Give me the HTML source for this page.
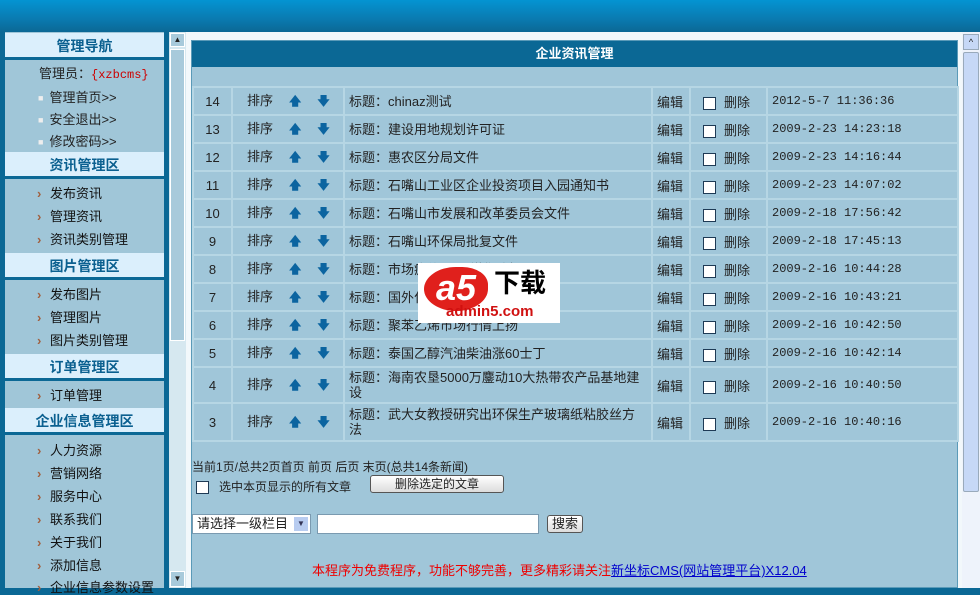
<!DOCTYPE html><html><head><meta charset="utf-8"><style>
*{margin:0;padding:0;box-sizing:border-box}
body{width:980px;height:588px;overflow:hidden;background:#0b6895;font:13px "Liberation Sans","Noto Sans CJK SC",sans-serif;position:relative;color:#222}
.a{position:absolute}
.top{left:0;top:0;width:980px;height:32px;background:linear-gradient(#0494d2,#0a7ab0 60%,#0b6895)}
.sb{left:5px;top:32px;width:159px;height:556px;background:#a0c6d8}
.h{position:absolute;left:5px;width:159px;height:27px;background:#dbeffc;border-bottom:3px solid #0b6895;color:#0b6090;font-weight:bold;font-size:14px;text-align:center;line-height:26px}
.it{position:absolute;left:50px;font-size:13px;color:#111;line-height:15px}
.it:before{content:"›";position:absolute;left:-13px;color:#a06040;font-weight:bold}
.main{left:186px;top:32px;width:776px;height:556px;background:#f2f8fb}
.box{left:191px;top:40px;width:767px;height:548px;background:#a0c6d9;border:1px solid #5a9ab8}
.hd{left:192px;top:41px;width:765px;height:26px;background:#0b6895;color:#fff;font-weight:bold;text-align:center;line-height:26px;font-size:13px}
table{position:absolute;left:192px;top:86px;border-collapse:collapse;font-size:13px}
td{border:2px solid #b6d6e4;background:#a0c6d9;height:28px;padding:0 4px;vertical-align:middle}
.n{width:39px;text-align:center}.s{width:112px;padding-left:14px}.t{width:308px;line-height:15px}.e{width:38px}.d{width:77px;padding-left:12px}.dt{width:191px;font-family:"Liberation Mono",monospace;font-size:12px}
.ar{color:#0b64a0;font-weight:bold;margin-left:16px;font-size:12px}
.cb{display:inline-block;width:13px;height:13px;border:1px solid #1e3a55;background:#fff;vertical-align:middle;margin-right:8px}
.scr{background:#a8cadb}
.btn{background:linear-gradient(#fff,#dcdcdc);border:1px solid #555;border-radius:3px;text-align:center;line-height:16px}
.bl{color:#eee;font-size:9px;margin-right:6px;vertical-align:1px}
</style></head><body>
<div class="a top"></div>
<div class="a sb"></div>
<div class="h" style="top:33px">管理导航</div>
<div class="a" style="left:39px;top:66px;line-height:15px">管理员：<span style="color:#c00;font-family:'Liberation Mono',monospace;font-size:12px">{xzbcms}</span></div>
<div class="a" style="left:38px;top:87px;line-height:22px;font-size:13px">
<div><span class="bl">■</span>管理首页&gt;&gt;</div><div><span class="bl">■</span>安全退出&gt;&gt;</div><div><span class="bl">■</span>修改密码&gt;&gt;</div></div>
<div class="h" style="top:152px">资讯管理区</div>
<div class="it" style="top:186px">发布资讯</div><div class="it" style="top:209px">管理资讯</div><div class="it" style="top:232px">资讯类别管理</div>
<div class="h" style="top:253px">图片管理区</div>
<div class="it" style="top:287px">发布图片</div><div class="it" style="top:310px">管理图片</div><div class="it" style="top:333px">图片类别管理</div>
<div class="h" style="top:354px">订单管理区</div>
<div class="it" style="top:388px">订单管理</div>
<div class="h" style="top:408px">企业信息管理区</div>
<div class="it" style="top:443px">人力资源</div><div class="it" style="top:466px">营销网络</div><div class="it" style="top:489px">服务中心</div><div class="it" style="top:512px">联系我们</div><div class="it" style="top:535px">关于我们</div><div class="it" style="top:558px">添加信息</div><div class="it" style="top:580px">企业信息参数设置</div>
<div class="a" style="left:169px;top:32px;width:17px;height:556px;background:#d6e8f0"></div>
<div class="a scr" style="left:170px;top:33px;width:15px;height:14px;border:1px solid #fff;text-align:center;font-size:8px;line-height:12px">▲</div>
<div class="a scr" style="left:170px;top:49px;width:15px;height:292px;border:1px solid #fff"></div>
<div class="a scr" style="left:170px;top:571px;width:15px;height:16px;border:1px solid #fff;text-align:center;font-size:8px;line-height:14px">▼</div>
<div class="a main"></div>
<div class="a box"></div>
<div class="a hd">企业资讯管理</div>
<table>
<tr><td class="n">14</td><td class="s">排序<span class="ar">🡅</span><span class="ar">🡇</span></td><td class="t">标题：chinaz测试</td><td class="e">编辑</td><td class="d"><span class="cb"></span>删除</td><td class="dt">2012-5-7 11:36:36</td></tr>
<tr><td class="n">13</td><td class="s">排序<span class="ar">🡅</span><span class="ar">🡇</span></td><td class="t">标题：建设用地规划许可证</td><td class="e">编辑</td><td class="d"><span class="cb"></span>删除</td><td class="dt">2009-2-23 14:23:18</td></tr>
<tr><td class="n">12</td><td class="s">排序<span class="ar">🡅</span><span class="ar">🡇</span></td><td class="t">标题：惠农区分局文件</td><td class="e">编辑</td><td class="d"><span class="cb"></span>删除</td><td class="dt">2009-2-23 14:16:44</td></tr>
<tr><td class="n">11</td><td class="s">排序<span class="ar">🡅</span><span class="ar">🡇</span></td><td class="t">标题：石嘴山工业区企业投资项目入园通知书</td><td class="e">编辑</td><td class="d"><span class="cb"></span>删除</td><td class="dt">2009-2-23 14:07:02</td></tr>
<tr><td class="n">10</td><td class="s">排序<span class="ar">🡅</span><span class="ar">🡇</span></td><td class="t">标题：石嘴山市发展和改革委员会文件</td><td class="e">编辑</td><td class="d"><span class="cb"></span>删除</td><td class="dt">2009-2-18 17:56:42</td></tr>
<tr><td class="n">9</td><td class="s">排序<span class="ar">🡅</span><span class="ar">🡇</span></td><td class="t">标题：石嘴山环保局批复文件</td><td class="e">编辑</td><td class="d"><span class="cb"></span>删除</td><td class="dt">2009-2-18 17:45:13</td></tr>
<tr><td class="n">8</td><td class="s">排序<span class="ar">🡅</span><span class="ar">🡇</span></td><td class="t">标题：市场疲软 山西煤焦油报价同期</td><td class="e">编辑</td><td class="d"><span class="cb"></span>删除</td><td class="dt">2009-2-16 10:44:28</td></tr>
<tr><td class="n">7</td><td class="s">排序<span class="ar">🡅</span><span class="ar">🡇</span></td><td class="t">标题：国外化工巨头看好中国化工业</td><td class="e">编辑</td><td class="d"><span class="cb"></span>删除</td><td class="dt">2009-2-16 10:43:21</td></tr>
<tr><td class="n">6</td><td class="s">排序<span class="ar">🡅</span><span class="ar">🡇</span></td><td class="t">标题：聚苯乙烯市场行情上扬</td><td class="e">编辑</td><td class="d"><span class="cb"></span>删除</td><td class="dt">2009-2-16 10:42:50</td></tr>
<tr><td class="n">5</td><td class="s">排序<span class="ar">🡅</span><span class="ar">🡇</span></td><td class="t">标题：泰国乙醇汽油柴油涨60士丁</td><td class="e">编辑</td><td class="d"><span class="cb"></span>删除</td><td class="dt">2009-2-16 10:42:14</td></tr>
<tr><td class="n" style="height:36px">4</td><td class="s">排序<span class="ar">🡅</span><span class="ar">🡇</span></td><td class="t">标题：海南农垦5000万鏖动10大热带农产品基地建设</td><td class="e">编辑</td><td class="d"><span class="cb"></span>删除</td><td class="dt">2009-2-16 10:40:50</td></tr>
<tr><td class="n" style="height:38px">3</td><td class="s">排序<span class="ar">🡅</span><span class="ar">🡇</span></td><td class="t">标题：武大女教授研究出环保生产玻璃纸粘胶丝方法</td><td class="e">编辑</td><td class="d"><span class="cb"></span>删除</td><td class="dt">2009-2-16 10:40:16</td></tr>
</table>
<div class="a" style="left:418px;top:263px;width:142px;height:60px;background:#fff">
<div class="a" style="left:6px;top:4px;width:64px;height:44px;background:#e0201c;border-radius:50% 40% 50% 50%;color:#fff;font:bold italic 36px 'Liberation Sans';text-align:center;line-height:42px">a5</div>
<div class="a" style="left:76px;top:4px;font:bold 26px 'Noto Sans CJK SC',sans-serif;color:#000;line-height:30px">下载</div>
<div class="a" style="left:28px;top:40px;font:bold 15px 'Liberation Sans';color:#d01010">admin5.com</div></div>
<div class="a" style="left:192px;top:458px;font-size:12px">当前1页/总共2页首页 前页 后页 末页(总共14条新闻)</div>
<div class="a" style="left:196px;top:478px;font-size:12px"><span class="cb" style="margin-right:10px"></span>选中本页显示的所有文章</div>
<div class="a btn" style="left:370px;top:475px;width:134px;height:18px;font-size:12px">删除选定的文章</div>
<div class="a" style="left:192px;top:514px;width:119px;height:20px;background:#fff;border:1px solid #7a9ab0;line-height:18px;padding-left:4px">请选择一级栏目<span style="position:absolute;right:2px;top:2px;width:14px;height:14px;background:#b8ccf0;font-size:8px;text-align:center;line-height:14px;color:#335">▼</span></div>
<div class="a" style="left:317px;top:514px;width:222px;height:20px;background:#fff;border:1px solid #7a9ab0"></div>
<div class="a btn" style="left:547px;top:515px;width:36px;height:18px">搜索</div>
<div class="a" style="left:312px;top:560px;color:#e00;font-size:13px">本程序为免费程序，功能不够完善，更多精彩请关注<span style="color:#00c;text-decoration:underline">新坐标CMS(网站管理平台)X12.04</span></div>
<div class="a" style="left:962px;top:32px;width:18px;height:556px;background:#eef3fb"></div>
<div class="a" style="left:963px;top:34px;width:16px;height:16px;background:#c6d8f6;border:1px solid #9ab;text-align:center;font-size:9px;line-height:14px">^</div>
<div class="a" style="left:963px;top:52px;width:16px;height:440px;background:#c6d8f6;border:1px solid #9ab;border-radius:2px"></div>
</body></html>
